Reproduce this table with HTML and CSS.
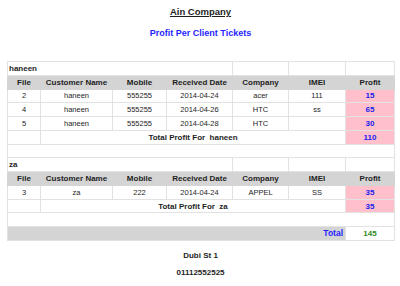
FILE: index.html
```html
<!DOCTYPE html>
<html>
<head>
<meta charset="utf-8">
<link rel="stylesheet" href="styles.css">
</head>
<body>
<div class="page">
  <h1 class="company">Ain Company</h1>
  <h2 class="subtitle">Profit Per Client Tickets</h2>
  <table class="report">
    <colgroup>
      <col class="c-file"><col class="c-name"><col class="c-mobile"><col class="c-date"><col class="c-company"><col class="c-imei"><col class="c-profit">
    </colgroup>
    <tbody>
      <tr class="client"><td colspan="4">haneen</td><td></td><td></td><td></td></tr>
      <tr class="head"><th>File</th><th>Customer Name</th><th>Mobile</th><th>Received Date</th><th>Company</th><th>IMEI</th><th>Profit</th></tr>
      <tr><td>2</td><td>haneen</td><td>555255</td><td>2014-04-24</td><td>acer</td><td>111</td><td class="profit">15</td></tr>
      <tr><td>4</td><td>haneen</td><td>555255</td><td>2014-04-26</td><td>HTC</td><td>ss</td><td class="profit">65</td></tr>
      <tr><td>5</td><td>haneen</td><td>555255</td><td>2014-04-28</td><td>HTC</td><td></td><td class="profit">30</td></tr>
      <tr class="subtotal"><td></td><td colspan="5">Total Profit For &nbsp;haneen</td><td class="profit">110</td></tr>
      <tr class="blank"><td colspan="7"></td></tr>
      <tr class="client"><td colspan="4">za</td><td></td><td></td><td></td></tr>
      <tr class="head"><th>File</th><th>Customer Name</th><th>Mobile</th><th>Received Date</th><th>Company</th><th>IMEI</th><th>Profit</th></tr>
      <tr><td>3</td><td>za</td><td>222</td><td>2014-04-24</td><td>APPEL</td><td>SS</td><td class="profit">35</td></tr>
      <tr class="subtotal"><td></td><td colspan="5">Total Profit For &nbsp;za</td><td class="profit">35</td></tr>
      <tr class="blank"><td colspan="7"></td></tr>
      <tr class="grand"><td colspan="6" class="grand-label">Total</td><td class="grand-value">145</td></tr>
    </tbody>
  </table>
  <p class="foot">Dubi St 1</p>
  <p class="foot phone">01112552525</p>
</div>
</body>
</html>
```
FILE: styles.css
```css
html, body {
  margin: 0;
  padding: 0;
  background: #ffffff;
}
.page {
  padding: 0 6px 0 7px;
  font-family: "Liberation Sans", Arial, sans-serif;
  color: #1e1e1e;
}
.company {
  margin: 6px 0 0;
  font-size: 9.5px;
  line-height: 12px;
  font-weight: bold;
  text-align: center;
  text-decoration: underline;
  color: #1e1e1e;
}
.subtitle {
  margin: 9px 0 0;
  font-size: 9px;
  line-height: 12px;
  font-weight: bold;
  text-align: center;
  color: #1f1fff;
}
.report {
  margin-top: 22px;
  width: 387px;
  border-collapse: collapse;
  table-layout: fixed;
  border: 1px solid #e2e2e2;
}
.c-file { width: 33px; }
.c-name { width: 72px; }
.c-mobile { width: 54px; }
.c-date { width: 66px; }
.c-company { width: 56px; }
.c-imei { width: 57px; }
.c-profit { width: 49px; }
.report tr { height: 13.77px; }
.report td, .report th {
  padding: 0;
  border: 1px solid #e2e2e2;
  font-size: 7.5px;
  line-height: 9px;
  text-align: center;
  vertical-align: middle;
  white-space: nowrap;
  overflow: hidden;
}
.report .client td {
  text-align: left;
  font-weight: bold;
  font-size: 8px;
  padding-left: 1px;
}
.report .head th {
  background: #d4d4d4;
  border-color: #d4d4d4;
  font-weight: bold;
  font-size: 8px;
  color: #1e1e1e;
}
.report td.profit {
  background: #ffc0cb;
  color: #2020f0;
  font-weight: bold;
  font-size: 8px;
}
.report .subtotal td {
  font-weight: bold;
  font-size: 8px;
}
.report td.grand-label {
  background: #d4d4d4;
  text-align: right;
  padding-right: 2px;
  color: #1f1fff;
  font-weight: bold;
  font-size: 8.5px;
}
.report td.grand-value {
  background: #ffffff;
  color: #2e8b22;
  font-weight: bold;
  font-size: 8px;
}
.foot {
  margin: 9px 0 0;
  font-size: 8px;
  line-height: 12px;
  font-weight: bold;
  text-align: center;
}
.foot.phone { margin-top: 5px; }
```
